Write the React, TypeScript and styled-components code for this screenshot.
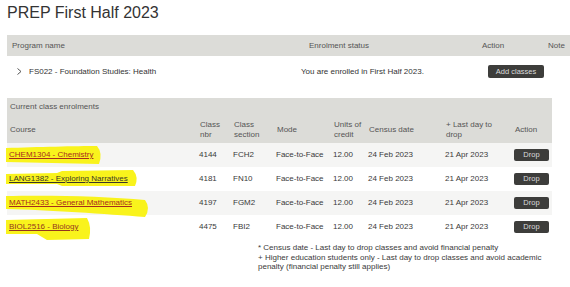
import React from "react";
import styled, { createGlobalStyle } from "styled-components";

const Global = createGlobalStyle`
  html, body { margin: 0; padding: 0; background: #fff; overflow: hidden; }
  body { font-family: "Liberation Sans", Arial, sans-serif; color: #3a3a3a; }
`;

const Page = styled.div`
  width: 570px;
  height: 287px;
  padding: 3px 0 0 7px;
  box-sizing: border-box;
  overflow: hidden;
`;

const Title = styled.h1`
  margin: 0;
  font-size: 16px;
  line-height: 20px;
  font-weight: normal;
  color: #333;
`;

const ProgramTable = styled.div`
  margin-top: 12px;
  width: 563px;
  font-size: 8px;
`;

const ProgramGrid = styled.div`
  display: grid;
  grid-template-columns: 290px 175px 70px 1fr;
  align-items: center;
`;

const ProgramHead = styled(ProgramGrid)`
  height: 21px;
  background: #dcdcd8;
  color: #555;
`;

const ProgramRow = styled(ProgramGrid)`
  height: 30px;
  color: #333;
`;

const Cell = styled.div<{ $pl: number }>`
  padding-left: ${(p) => p.$pl}px;
  white-space: nowrap;
`;

const ProgramName = styled.div`
  display: flex;
  align-items: center;
  gap: 7px;
  padding-left: 10px;
`;

const DarkButton = styled.button<{ $w: number; $h: number }>`
  width: ${(p) => p.$w}px;
  height: ${(p) => p.$h}px;
  padding: 0;
  border: none;
  border-radius: 2px;
  background: #3d3d3b;
  color: #dcdcdc;
  font-family: "Liberation Sans", Arial, sans-serif;
  font-size: 7.5px;
  line-height: ${(p) => p.$h}px;
  display: block;
`;

const cols = "190px 34px 43px 57px 35px 77px 69px 40px";

const EnrolTable = styled.div`
  margin-top: 12px;
  width: 545px;
  font-size: 8px;
`;

const EnrolHead = styled.div`
  background: #dcdcd8;
  color: #555;
  padding: 4px 0 3px;
`;

const Caption = styled.div`
  padding-left: 3px;
  height: 18px;
  line-height: 10px;
`;

const HeadRow = styled.div`
  display: grid;
  grid-template-columns: ${cols};
  align-items: center;
  height: 20px;
  line-height: 10px;
`;

const HeadCell = styled.div`
  padding-left: 3px;
`;

const DataRow = styled.div<{ $alt: boolean }>`
  display: grid;
  grid-template-columns: ${cols};
  align-items: center;
  height: 24px;
  line-height: 10px;
  color: #3a3a3a;
  background: ${(p) => (p.$alt ? "#f5f5f4" : "#fff")};
`;

const DataCell = styled.div`
  padding-left: 2px;
  white-space: nowrap;
`;

const CourseCell = styled.div`
  position: relative;
  padding-left: 2px;
  white-space: nowrap;
`;

const Marker = styled.svg`
  position: absolute;
  left: -4px;
  top: -7px;
  overflow: visible;
  z-index: 0;
  pointer-events: none;
`;

const CourseLink = styled.a<{ $c: string }>`
  position: relative;
  z-index: 1;
  color: ${(p) => p.$c};
  text-decoration: underline;
`;

const Footnote = styled.div`
  margin: 4px 0 0 251px;
  width: 300px;
  font-size: 8px;
  line-height: 9.5px;
  color: #3a3a3a;
`;

type Course = {
  name: string;
  nbr: string;
  section: string;
  color: string;
  marker: string;
};

const courses: Course[] = [
  {
    name: "CHEM1304 - Chemistry",
    nbr: "4144",
    section: "FCH2",
    color: "#a82c1c",
    marker: "M-1 5 C30 4 70 3 90 3 Q96 10 92 21 C60 20 30 20 -1 19 Z",
  },
  {
    name: "LANG1382 - Exploring Narratives",
    nbr: "4181",
    section: "FN10",
    color: "#3a3628",
    marker: "M-1 7 L50 6 L55 4 L126 3 Q132 10 128 19 L55 19 L50 17 L-1 17 Z",
  },
  {
    name: "MATH2433 - General Mathematics",
    nbr: "4197",
    section: "FGM2",
    color: "#a82c1c",
    marker: "M-1 5 C40 4 100 5 138 9 Q144 17 138 26 C100 23 40 19 -1 18 Z",
  },
  {
    name: "BIOL2516 - Biology",
    nbr: "4475",
    section: "FBI2",
    color: "#94361e",
    marker: "M-1 5 L80 3 Q85 12 82 24 L40 25 L30 19 L-1 19 Z",
  },
];

const Chevron = () => (
  <svg width="5" height="7" viewBox="0 0 5 7">
    <polyline points="0.5,0.5 4,3.5 0.5,6.5" fill="none" stroke="#444" strokeWidth="0.9" />
  </svg>
);

export default function App() {
  return (
    <>
      <Global />
      <Page>
        <Title>PREP First Half 2023</Title>
        <ProgramTable>
          <ProgramHead>
            <Cell $pl={5}>Program name</Cell>
            <Cell $pl={12}>Enrolment status</Cell>
            <Cell $pl={10}>Action</Cell>
            <Cell $pl={6}>Note</Cell>
          </ProgramHead>
          <ProgramRow>
            <ProgramName>
              <Chevron />
              <span>FS022 - Foundation Studies: Health</span>
            </ProgramName>
            <Cell $pl={4}>You are enrolled in First Half 2023.</Cell>
            <Cell $pl={16}>
              <DarkButton $w={56} $h={13}>Add classes</DarkButton>
            </Cell>
            <Cell $pl={0} />
          </ProgramRow>
        </ProgramTable>

        <EnrolTable>
          <EnrolHead>
            <Caption>Current class enrolments</Caption>
            <HeadRow>
              <HeadCell>Course</HeadCell>
              <HeadCell>Class<br />nbr</HeadCell>
              <HeadCell>Class<br />section</HeadCell>
              <HeadCell>Mode</HeadCell>
              <HeadCell>Units of<br />credit</HeadCell>
              <HeadCell>Census date</HeadCell>
              <HeadCell>+ Last day to<br />drop</HeadCell>
              <HeadCell>Action</HeadCell>
            </HeadRow>
          </EnrolHead>
          {courses.map((c, i) => (
            <DataRow key={c.nbr} $alt={i % 2 === 0}>
              <CourseCell>
                <Marker width="160" height="30" viewBox="-4 0 160 30">
                  <path d={c.marker} fill="#f9f31c" />
                </Marker>
                <CourseLink $c={c.color} href="#">{c.name}</CourseLink>
              </CourseCell>
              <DataCell>{c.nbr}</DataCell>
              <DataCell>{c.section}</DataCell>
              <DataCell>Face-to-Face</DataCell>
              <DataCell>12.00</DataCell>
              <DataCell>24 Feb 2023</DataCell>
              <DataCell>21 Apr 2023</DataCell>
              <DataCell>
                <DarkButton $w={35} $h={12}>Drop</DarkButton>
              </DataCell>
            </DataRow>
          ))}
        </EnrolTable>

        <Footnote>
          * Census date - Last day to drop classes and avoid financial penalty
          <br />
          + Higher education students only - Last day to drop classes and avoid academic penalty (financial penalty still applies)
        </Footnote>
      </Page>
    </>
  );
}
